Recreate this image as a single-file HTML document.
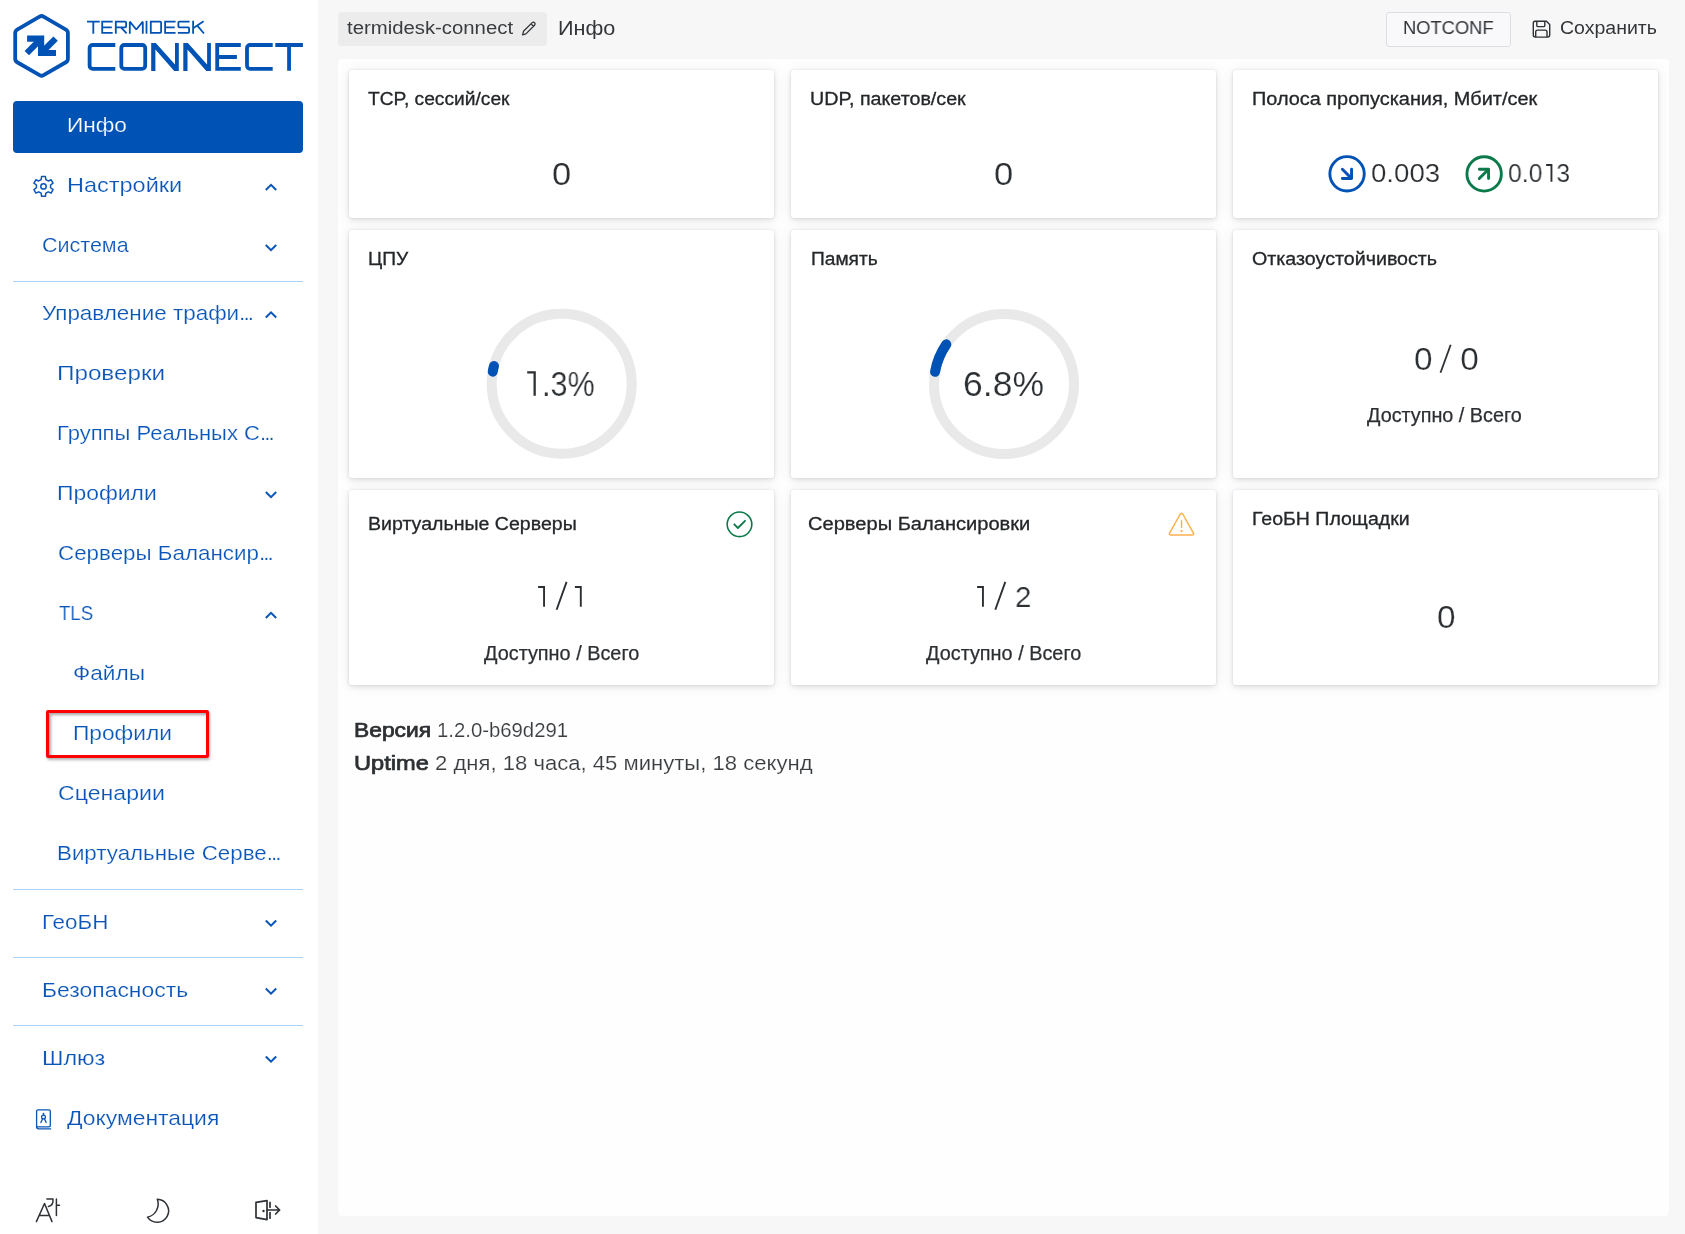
<!DOCTYPE html>
<html><head><meta charset="utf-8">
<style>
*{margin:0;padding:0;box-sizing:border-box}
html,body{width:1685px;height:1234px;overflow:hidden}
body{background:#f7f7f7;font-family:"Liberation Sans",sans-serif;position:relative;color:#2b2e31}
.t{position:absolute;white-space:nowrap;line-height:1;transform-origin:0 0;will-change:transform}
#side{position:absolute;left:0;top:0;width:318px;height:1234px;background:#fff}
.nav{color:#0a55b8;font-size:21px;-webkit-text-stroke:0.2px #fff}
.div{position:absolute;left:13px;width:290px;height:1px;background:#a9d2f6}
svg{position:absolute;overflow:visible}
#panel{position:absolute;left:338px;top:59px;width:1331px;height:1157px;background:#fefefe;border-radius:4px;box-shadow:0 0 3px rgba(0,0,0,0.02)}
.card{position:absolute;background:#fff;border-radius:3px;box-shadow:0 0 1px 1px rgba(120,120,200,0.06),0 2px 5px rgba(0,0,0,0.09),0 1px 14px rgba(0,0,0,0.07)}
.ct{font-size:18px;color:#24272a;-webkit-text-stroke:0.3px #24272a}
.big{color:#2d3033;-webkit-text-stroke:0.2px #fff}
.hid{color:transparent;-webkit-text-stroke-color:transparent}
.sub{font-size:19.5px;color:#2d3033;-webkit-text-stroke:0.25px #2d3033}
</style></head><body>
<div id="side">
 <svg style="left:0;top:0" width="318" height="90" viewBox="0 0 318 90">
  <path d="M39.55 16.62 A4.0 4.0 0 0 1 43.55 16.62 L65.90 29.53 A4.0 4.0 0 0 1 67.90 32.99 L67.90 58.81 A4.0 4.0 0 0 1 65.90 62.27 L43.55 75.18 A4.0 4.0 0 0 1 39.55 75.18 L17.20 62.27 A4.0 4.0 0 0 1 15.20 58.81 L15.20 32.99 A4.0 4.0 0 0 1 17.20 29.53 Z" fill="none" stroke="#0053b5" stroke-width="3.8"/>
  <g fill="none" stroke="#0053b5" stroke-width="6.2" stroke-linejoin="miter" stroke-linecap="butt">
   <path d="M27.1 38.7 H41.1 V53 H56"/>
   <path d="M41.1 38.7 L26.8 53.1"/>
   <path d="M41.1 53 L55.6 38.6"/>
  </g>
  <g fill="none" stroke="#0053b5" stroke-width="1.8" stroke-linejoin="miter">
   <path d="M87 21.7 H99.8 M93.3 21.7 V33.7"/>
   <path d="M112.7 21.7 H102.2 V32.8 H112.7 M102.2 27.3 H111.8"/>
   <path d="M115.8 33.7 V21.7 H125.2 Q126.1 21.7 126.1 22.6 V26.4 Q126.1 27.3 125.2 27.3 H115.8 M121 27.3 L126.6 33.4"/>
   <path d="M129.8 33.7 V21.7 L136.3 29.5 L142.8 21.7 V33.7" stroke-linejoin="bevel"/>
   <path d="M146.5 20.8 V33.7"/>
   <path d="M150.8 21.7 H160.2 Q161.1 21.7 161.1 22.6 V31.9 Q161.1 32.8 160.2 32.8 H150.8 Z"/>
   <path d="M175.6 21.7 H165.1 V32.8 H175.6 M165.1 27.3 H174.7"/>
   <path d="M189.6 21.7 H179.4 Q178.4 21.7 178.4 22.6 V26.4 Q178.4 27.3 179.4 27.3 H188.2 Q189.1 27.3 189.1 28.2 V31.9 Q189.1 32.8 188.2 32.8 H177.8"/>
   <path d="M193.1 20.8 V33.7 M193.1 28.2 L203.6 21.2 M197.3 25.6 L204 33.5"/>
  </g>
  <g fill="none" stroke="#0053b5" stroke-width="3.8" stroke-linejoin="miter">
   <path d="M115.3 45 H92.6 A3 3 0 0 0 89.6 48 V65.8 A3 3 0 0 0 92.6 68.8 H115.3"/>
   <path d="M124.3 45 H142.2 A3 3 0 0 1 145.2 48 V65.8 A3 3 0 0 1 142.2 68.8 H124.3 A3 3 0 0 1 121.3 65.8 V48 A3 3 0 0 1 124.3 45 Z"/>
   <path d="M240.8 45 H217.2 V68.8 H240.8 M217.2 57 H236.9"/>
   <path d="M272.7 45 H250 A3 3 0 0 0 247 48 V65.8 A3 3 0 0 0 250 68.8 H272.7"/>
   <path d="M275.3 45 H302.9 M289.05 45 V70.7"/>
  </g>
  <g fill="#0053b5">
   <path d="M151.2 43 H155.8 L175 64.6 V43 H178.8 V70.9 H174.2 L155.4 49.5 V70.9 H151.2 Z"/>
   <path d="M183.3 43 H187.9 L207.1 64.6 V43 H210.9 V70.9 H206.3 L187.5 49.5 V70.9 H183.3 Z"/>
  </g>
 </svg>
 <div style="position:absolute;left:13px;top:101px;width:290px;height:52px;background:#0053b5;border-radius:4px"></div>
 <div class="t nav" id="s_info" style="left:66.8px;top:114px;color:#fff;transform:scaleX(1.077);-webkit-text-stroke:0.2px #0053b5">Инфо</div>
 <svg style="left:0;top:0" width="60" height="210"><path transform="translate(43.5 186.4)" d="M-2.34 -6.81 L-1.93 -9.91 L1.93 -9.91 L2.34 -6.81 L4.72 -5.43 L7.62 -6.63 L9.55 -3.29 L7.07 -1.37 L7.07 1.37 L9.55 3.29 L7.62 6.63 L4.72 5.43 L2.34 6.81 L1.93 9.91 L-1.93 9.91 L-2.34 6.81 L-4.72 5.43 L-7.62 6.63 L-9.55 3.29 L-7.07 1.37 L-7.07 -1.37 L-9.55 -3.29 L-7.62 -6.63 L-4.72 -5.43 Z" fill="none" stroke="#0a55b8" stroke-width="1.5" stroke-linejoin="round"/><circle cx="43.5" cy="186.4" r="2.7" fill="none" stroke="#0a55b8" stroke-width="1.5"/></svg>
 <div class="t nav" id="s_nastr" style="left:66.9px;top:174px;transform:scaleX(1.119)">Настройки</div>
 <div class="t nav" id="s_sys" style="left:42.4px;top:234px;transform:scaleX(1.024)">Система</div>
 <div class="div" style="top:281px"></div>
 <div class="t nav" id="s_upr" style="left:42.2px;top:302px;transform:scaleX(1.068)">Управление трафи<span style="letter-spacing:-1.8px">..</span>.</div>
 <div class="t nav" id="s_prov" style="left:56.7px;top:362px;transform:scaleX(1.154)">Проверки</div>
 <div class="t nav" id="s_grp" style="left:56.8px;top:422px;transform:scaleX(1.048)">Группы Реальных С<span style="letter-spacing:-1.8px">..</span>.</div>
 <div class="t nav" id="s_prof" style="left:56.7px;top:482px;transform:scaleX(1.091)">Профили</div>
 <div class="t nav" id="s_serv" style="left:57.8px;top:542px;transform:scaleX(1.065)">Серверы Балансир<span style="letter-spacing:-1.8px">..</span>.</div>
 <div class="t nav" id="s_tls" style="left:58.7px;top:602px;transform:scaleX(0.888)">TLS</div>
 <div class="t nav" id="s_files" style="left:72.7px;top:662px;transform:scaleX(1.079)">Файлы</div>
 <div class="t nav" id="s_prof2" style="left:72.6px;top:722px;transform:scaleX(1.082)">Профили</div>
 <div style="position:absolute;left:46px;top:710px;width:163px;height:48px;border:3px solid #ff0000;border-radius:2px;box-shadow:1px 2px 3px rgba(0,0,0,0.3), inset 2px 2px 3px rgba(0,0,0,0.35)"></div>
 <div class="t nav" id="s_scen" style="left:57.7px;top:782px;transform:scaleX(1.101)">Сценарии</div>
 <div class="t nav" id="s_virt" style="left:56.8px;top:842px;transform:scaleX(1.063)">Виртуальные Серве<span style="letter-spacing:-1.8px">..</span>.</div>
 <div class="div" style="top:889px"></div>
 <div class="t nav" id="s_geo" style="left:41.8px;top:911px;transform:scaleX(1.066)">ГеоБН</div>
 <div class="div" style="top:957px"></div>
 <div class="t nav" id="s_sec" style="left:41.9px;top:979px;transform:scaleX(1.091)">Безопасность</div>
 <div class="div" style="top:1025px"></div>
 <div class="t nav" id="s_gw" style="left:41.9px;top:1047px;transform:scaleX(1.113)">Шлюз</div>
 <div class="t nav" id="s_doc" style="left:67.4px;top:1107px;transform:scaleX(1.090)">Документация</div>
 <!-- chevrons -->
 <svg style="left:0;top:0" width="318" height="1234">
  <g fill="none" stroke="#0a55b8" stroke-width="2" stroke-linecap="butt" stroke-linejoin="miter">
   <path d="M265.8 190 L271 184.8 L276.2 190"/>
   <path d="M265.8 245 L271 250.2 L276.2 245"/>
   <path d="M265.8 317.5 L271 312.3 L276.2 317.5"/>
   <path d="M265.8 492 L271 497.2 L276.2 492"/>
   <path d="M265.8 618 L271 612.8 L276.2 618"/>
   <path d="M265.8 920.5 L271 925.7 L276.2 920.5"/>
   <path d="M265.8 988.5 L271 993.7 L276.2 988.5"/>
   <path d="M265.8 1056.5 L271 1061.7 L276.2 1056.5"/>
  </g>
  <!-- doc icon -->
  <g fill="none" stroke="#0a55b8" stroke-width="1.3" stroke-linecap="round">
   <path d="M38 1109.8 H49 Q50.3 1109.8 50.3 1111.1 V1125.5 Q50.3 1126.8 49 1126.8 H36.6 V1111.2 Q36.6 1109.8 38 1109.8 Z"/>
   <path d="M36.6 1126.8 Q36.6 1128.9 38.6 1128.9 H50.6"/>
   <path d="M43.5 1113.3 V1115.1"/>
   <circle cx="43.5" cy="1117" r="1.9"/>
   <path d="M42.6 1118.7 L40.9 1122.6 M44.4 1118.7 L46.1 1122.6"/>
  </g>
  <!-- bottom icons -->
  <g fill="none" stroke="#2e3135" stroke-width="1.5" stroke-linecap="round" stroke-linejoin="round">
   <path d="M36.4 1221.6 L44.5 1203.5 L52 1221.6 M39.7 1215.6 H48.6"/>
   <path d="M46.9 1199 H53 Q53.6 1205.5 48.4 1206.5"/>
   <path d="M56.4 1198.9 V1215.6 M56.4 1205.3 H59.5"/>
   <path d="M157.3 1199.3 A11.5 11.5 0 1 1 147.5 1217.2 A13.5 13.5 0 0 0 157.3 1199.3 Z"/>
   <path d="M256 1202.3 L267 1200.6 V1219.6 L256 1217.6 Z" stroke-width="1.7"/>
   <path d="M270 1202.4 V1207.2 M270 1212.6 V1218.2" stroke-width="1.7"/>
   <path d="M267 1210 H279.6 M275.6 1206 L279.6 1210 L275.6 1214" stroke-width="1.7"/>
  </g>
  <circle cx="263.5" cy="1211" r="1.2" fill="#2e3135"/>
 </svg>
</div>

<div style="position:absolute;left:338px;top:12px;width:209px;height:34px;background:#ececec;border-radius:4px"></div>
<div class="t" id="h_name" style="left:347.0px;top:19px;font-size:18px;color:#3a3d40;transform:scaleX(1.129)">termidesk-connect</div>
<svg style="left:0;top:0" width="560" height="50"><g fill="none" stroke="#2e3135" stroke-width="1.45" stroke-linejoin="round" transform="translate(522.6 34.8) scale(0.87) translate(-522.5 -35)"><path d="M522.5 35 L523.5 31 L533.5 21 Q535 19.8 536.3 21.2 Q537.6 22.6 536.2 24 L526.3 34 Z M532.2 22.4 L535 25.2"/></g></svg>
<div class="t" id="h_info" style="left:558.3px;top:17px;font-size:21px;color:#333639;transform:scaleX(1.031)">Инфо</div>
<div style="position:absolute;left:1386px;top:12px;width:125px;height:35px;background:#f9f9fb;border:1px solid #dcdde0;border-radius:3px"></div>
<div class="t" id="h_notconf" style="left:1403.0px;top:19px;font-size:18.5px;color:#333639;transform:scaleX(0.990)">NOTCONF</div>
<svg style="left:0;top:0" width="1560" height="50"><g fill="none" stroke="#2e3135" stroke-width="1.4" stroke-linejoin="round"><path d="M1535 21.3 H1546.5 L1549.7 24.5 V35 Q1549.7 37.1 1547.6 37.1 H1535.4 Q1533.3 37.1 1533.3 35 V23.4 Q1533.3 21.3 1535 21.3 Z"/><path d="M1536.8 21.3 V25.4 Q1536.8 26.6 1538 26.6 H1543.6 Q1544.8 26.6 1544.8 25.4 V21.3"/><path d="M1535.7 37.1 V31.9 Q1535.7 30.1 1537.5 30.1 H1545.2 Q1547 30.1 1547 31.9 V37.1"/></g></svg>
<div class="t" id="h_save" style="left:1560.1px;top:19px;font-size:18px;color:#333639;transform:scaleX(1.084)">Сохранить</div>

<div id="panel"></div>
<div class="card" style="left:349px;top:70px;width:425px;height:148px"></div>
<div class="card" style="left:791px;top:70px;width:425px;height:148px"></div>
<div class="card" style="left:1233px;top:70px;width:425px;height:148px"></div>
<div class="card" style="left:349px;top:230px;width:425px;height:248px"></div>
<div class="card" style="left:791px;top:230px;width:425px;height:248px"></div>
<div class="card" style="left:1233px;top:230px;width:425px;height:248px"></div>
<div class="card" style="left:349px;top:490px;width:425px;height:195px"></div>
<div class="card" style="left:791px;top:490px;width:425px;height:195px"></div>
<div class="card" style="left:1233px;top:490px;width:425px;height:195px"></div>

<div class="t ct" id="c_tcp" style="left:367.8px;top:90px;transform:scaleX(1.066)">TCP, сессий/сек</div>
<div class="t ct" id="c_udp" style="left:810.1px;top:90px;transform:scaleX(1.093)">UDP, пакетов/сек</div>
<div class="t ct" id="c_bw" style="left:1251.9px;top:90px;transform:scaleX(1.105)">Полоса пропускания, Мбит/сек</div>
<div class="t big" id="v_tcp" style="left:551.9px;top:158px;font-size:32px;transform:scaleX(1.082)">0</div>
<div class="t big" id="v_udp" style="left:993.9px;top:158px;font-size:32px;transform:scaleX(1.082)">0</div>
<svg style="left:0;top:0" width="1685" height="700">
 <g fill="none" stroke-width="2.9"><circle cx="1347.05" cy="173.85" r="17.2" stroke="#0053b5"/><circle cx="1484.15" cy="173.9" r="17.2" stroke="#0a7a4a"/></g>
 <g fill="none" stroke-width="2.9" stroke-linecap="round" stroke-linejoin="round">
  <path d="M1342.35 169.25 L1351.2 178.1 M1342.35 178.55 H1351.55 V169.25" stroke="#0053b5"/>
  <path d="M1479.3 178.55 L1488.1 169.7 M1479.3 169.25 H1488.55 V178.55" stroke="#0a7a4a"/>
 </g>
 <!-- gauges -->
 <circle cx="561.7" cy="383.8" r="70" fill="none" stroke="#e9e9e9" stroke-width="10"/>
 <path d="M492.76 371.65 A70 70 0 0 1 493.99 366.03" fill="none" stroke="#0053b5" stroke-width="10" stroke-linecap="round"/>
 <circle cx="1004" cy="384" r="70" fill="none" stroke="#e9e9e9" stroke-width="10"/>
 <path d="M935.06 371.85 A70 70 0 0 1 946.31 344.35" fill="none" stroke="#0053b5" stroke-width="10" stroke-linecap="round"/>
 <!-- check -->
 <circle cx="739.5" cy="524.3" r="12.3" fill="none" stroke="#0b7a48" stroke-width="1.6"/>
 <path d="M734.3 524.3 L737.9 528 L745 520.8" fill="none" stroke="#0b7a48" stroke-width="1.8" stroke-linecap="round" stroke-linejoin="round"/>
 <!-- warning -->
 <path d="M1180 514.5 Q1181.5 512 1183 514.5 L1193.3 532.8 Q1194.6 535 1192 535 H1171 Q1168.4 535 1169.7 532.8 Z" fill="none" stroke="#ffb04d" stroke-width="1.5" stroke-linejoin="round"/>
 <path d="M1181.5 520.8 V527.4" stroke="#ffb04d" stroke-width="1.5" stroke-linecap="round"/>
 <circle cx="1181.5" cy="531.1" r="1.15" fill="#ffb04d"/>
</svg>
<div class="t big" id="v_in" style="left:1370.7px;top:160px;font-size:26px;transform:scaleX(1.063)">0.003</div>
<div class="t big" id="v_out" style="left:1508.0px;top:160px;font-size:26px;transform:scaleX(0.952)">0.0<span class="hid">1</span>3</div>

<div class="t ct" id="c_cpu" style="left:368.1px;top:250px;transform:scaleX(1.067)">ЦПУ</div>
<div class="t ct" id="c_mem" style="left:810.7px;top:250px;transform:scaleX(1.065)">Память</div>
<div class="t ct" id="c_ha" style="left:1252.0px;top:250px;transform:scaleX(1.092)">Отказоустойчивость</div>
<div class="t big" id="v_cpu" style="left:525.4px;top:366px;font-size:35px;transform:scaleX(0.873)"><span class="hid">1</span>.3%</div>
<div class="t big" id="v_mem" style="left:962.9px;top:366px;font-size:35px;transform:scaleX(1.015)">6.8%</div>
<div class="t big" id="v_ha" style="left:1413.5px;top:344.1px;font-size:31px;transform:scaleX(1.075)">0 <span class="hid">/</span> 0</div>
<div class="t sub" id="s_ha" style="left:1367.2px;top:406px;transform:scaleX(1.015)">Доступно / Всего</div>

<div class="t ct" id="c_vs" style="left:368.1px;top:515px;transform:scaleX(1.087)">Виртуальные Серверы</div>
<div class="t ct" id="c_lb" style="left:808.2px;top:515px;transform:scaleX(1.116)">Серверы Балансировки</div>
<div class="t ct" id="c_geo" style="left:1251.7px;top:510px;transform:scaleX(1.085)">ГеоБН Площадки</div>
<div class="t big" id="v_vs" style="left:535.3px;top:582px;font-size:30px;transform:scaleX(0.863)"><span class="hid">1 / 1</span></div>
<div class="t big" id="v_lb" style="left:974.0px;top:582px;font-size:30px;transform:scaleX(0.983)"><span class="hid">1 / </span>2</div>
<div class="t big" id="v_geo" style="left:1436.7px;top:601px;font-size:32px;transform:scaleX(1.041)">0</div>
<div class="t sub" id="s_vs" style="left:484.0px;top:644px;transform:scaleX(1.018)">Доступно / Всего</div>
<div class="t sub" id="s_lb" style="left:926.0px;top:644px;transform:scaleX(1.018)">Доступно / Всего</div>

<div class="t" id="ver1" style="left:354.2px;top:720px;font-size:20px;color:#2d3033;transform:scaleX(1.141);-webkit-text-stroke:0.7px #2d3033">Версия</div>
<div class="t" id="ver2" style="left:437.0px;top:720px;font-size:20px;color:#3a3d40;transform:scaleX(1.016);-webkit-text-stroke:0.15px #fdfdfd">1.2.0-b69d291</div>
<div class="t" id="up1" style="left:354.2px;top:753px;font-size:20px;color:#2d3033;transform:scaleX(1.181);-webkit-text-stroke:0.7px #2d3033">Uptime</div>
<div class="t" id="up2" style="left:434.9px;top:753px;font-size:20px;color:#3a3d40;transform:scaleX(1.104);-webkit-text-stroke:0.15px #fdfdfd">2 дня, 18 часа, 45 минуты, 18 секунд</div>
<svg style="left:0;top:0;pointer-events:none" width="1685" height="700">
 <g fill="none" stroke="#2d3033" stroke-linejoin="miter" stroke-linecap="butt">
  <path d="M538.1 586.95 H544.05 V606.8 M574.9 586.95 H580.8 V606.8 M556.6 609.7 L566.6 581.9" stroke-width="1.9"/>
  <path d="M977.1 586.95 H982.95 V606.8 M995.3 609.7 L1005.3 581.9" stroke-width="1.9"/>
  <path d="M1440.5 372.7 L1450.7 344.7" stroke-width="1.8"/>
  <path d="M527.2 372.35 H534.65 V395.8" stroke-width="2.3"/>
  <path d="M1546.1 165 H1551.45 V181.8" stroke-width="1.9"/>
 </g>
</svg>
</body></html>
